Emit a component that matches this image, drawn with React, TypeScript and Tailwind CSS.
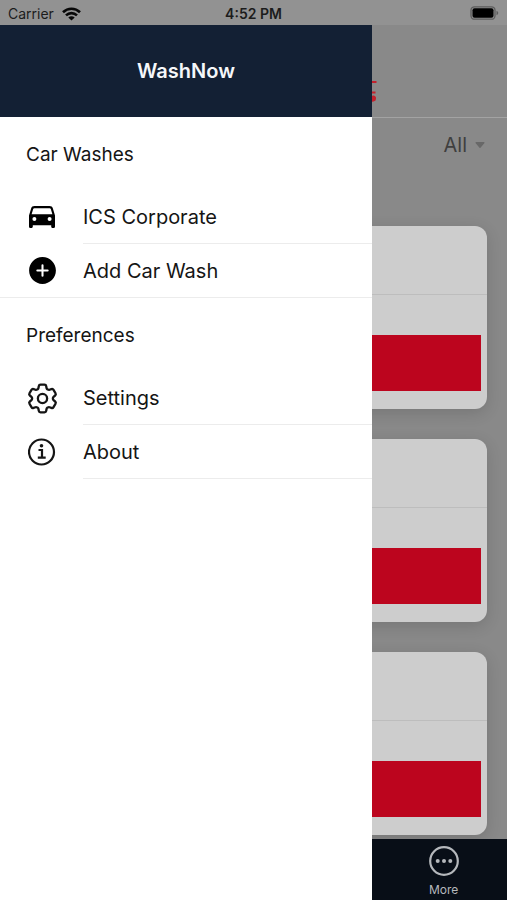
import type { ReactNode } from "react";
import { HiOutlineCog6Tooth } from "react-icons/hi2";
import { IoAddCircle, IoCaretDown } from "react-icons/io5";

function StatusBar() {
  return (
    <div className="grid h-[25px] shrink-0 grid-cols-3 items-center bg-[#929292] px-2 text-sm text-[#1c1c1c]">
      <div className="flex items-center gap-2 pt-0.5">
        <span>Carrier</span>
        <svg className="h-[14px] w-[19px]" viewBox="0 0 19 14" aria-hidden="true">
          <g fill="none" stroke="#080808" strokeWidth="2.6">
            <path d="M1 5.2C5.800 .5 13.200 .5 18 5.200" />
            <path d="M4 8.400C7.200 5.300 11.800 5.300 15 8.400" />
          </g>
          <path d="M6.300 10.400C8.200 8.800 10.800 8.800 12.700 10.400L9.500 13.600Z" fill="#080808" />
        </svg>
      </div>
      <span className="pt-0.5 text-center font-semibold whitespace-nowrap">4:52 PM</span>
      <svg className="h-[14px] w-[30px] justify-self-end" viewBox="0 0 30 14" aria-hidden="true">
        <rect x="2" y=".8" width="24" height="12.400" rx="3.500" fill="none" stroke="#5c5c5c" strokeWidth="1.300" />
        <rect x="3.500" y="2.300" width="21" height="9.400" rx="2" fill="#000" />
        <path d="M27.500 4.800C29.800 5.600 29.800 8.400 27.500 9.200Z" fill="#5c5c5c" />
      </svg>
    </div>
  );
}

function CarIcon() {
  return (
    <svg className="h-[22px] w-[26px] shrink-0" viewBox="0 0 26 22" aria-hidden="true">
      <path
        fillRule="evenodd"
        fill="#000"
        d="M5.500 0H20.500C22.300 0 23.400 .9 23.800 2.300L26 9.500V20.500C26 21.400 25.500 22 24.700 22H23.600C22.700 22 22.200 21.400 22.200 20.500V19.300H3.800V20.500C3.800 21.400 3.300 22 2.400 22H1.300C.5 22 0 21.400 0 20.500V9.500L2.200 2.300C2.600 .9 3.700 0 5.500 0ZM5.300 2.200C4.700 2.200 4.400 2.500 4.200 3L2.600 8.200H23.400L21.800 3C21.600 2.500 21.300 2.200 20.700 2.200ZM5.400 11A2 2 0 1 0 5.400 15A2 2 0 1 0 5.400 11ZM20.600 11A2 2 0 1 0 20.600 15A2 2 0 1 0 20.600 11Z"
      />
    </svg>
  );
}

function InfoIcon() {
  return (
    <svg className="mr-px h-7 w-7 shrink-0" viewBox="0 0 28 28" fill="none" stroke="#151515" aria-hidden="true">
      <circle cx="13.500" cy="14" r="12.500" strokeWidth="2.200" />
      <path d="M10.500 12H14V19.500M9.800 19.700H17.700" strokeWidth="2.200" />
      <circle cx="13.500" cy="7.800" r="1.800" fill="#151515" stroke="none" />
    </svg>
  );
}

function MoreIcon() {
  return (
    <svg className="h-[30px] w-[30px]" viewBox="0 0 30 30" aria-hidden="true">
      <circle cx="15" cy="15" r="13.800" fill="none" stroke="#b5b8bc" strokeWidth="2.200" />
      <g fill="#b5b8bc">
        <circle cx="8.700" cy="15" r="2" />
        <circle cx="15" cy="15" r="2" />
        <circle cx="21.300" cy="15" r="2" />
      </g>
    </svg>
  );
}

function WashCard() {
  return (
    <article className="rounded-xl bg-[#cdcdcd] shadow-[0_4px_16px_rgba(0,0,0,0.14)]">
      <div className="h-[69px] border-b border-[#bdbdbd]" />
      <div className="px-1.5 pt-10 pb-[18px]">
        <div className="h-14 bg-[#bc051e]" />
      </div>
    </article>
  );
}

function MenuItem({ icon, label, full = false }: { icon: ReactNode; label: string; full?: boolean }) {
  return (
    <li className={full ? "border-b border-[#ececec]" : ""}>
      <button type="button" className="flex w-full items-center pl-[26px] text-left text-xl">
        <span className="flex w-[57px] shrink-0">
          <span className="flex w-8 justify-center">{icon}</span>
        </span>
        <span className={full ? "flex h-[53px] grow items-center" : "flex h-[54px] grow items-center border-b border-[#ececec]"}>
          {label}
        </span>
      </button>
    </li>
  );
}

function MenuHeading({ children }: { children: ReactNode }) {
  return <h2 className="flex h-[73px] items-center pt-1 pl-[26px] text-[19px]">{children}</h2>;
}

function Drawer() {
  return (
    <aside className="absolute top-[25px] bottom-0 left-0 w-[372px] max-w-full bg-white text-[#151515]">
      <header className="flex h-[92px] items-center justify-center bg-[#132034]">
        <h1 className="text-xl font-semibold text-[#f5f7fa]">WashNow</h1>
      </header>
      <nav>
        <MenuHeading>Car Washes</MenuHeading>
        <ul>
          <MenuItem icon={<CarIcon />} label="ICS Corporate" />
          <MenuItem icon={<IoAddCircle size={33} className="shrink-0 text-black" />} label="Add Car Wash" full />
        </ul>
        <MenuHeading>Preferences</MenuHeading>
        <ul>
          <MenuItem icon={<HiOutlineCog6Tooth size={37} className="shrink-0" />} label="Settings" />
          <MenuItem icon={<InfoIcon />} label="About" />
        </ul>
      </nav>
    </aside>
  );
}

export default function App() {
  return (
    <div className="relative flex h-screen flex-col overflow-hidden bg-[#898989] font-['Inter','Liberation_Sans',sans-serif]">
      <StatusBar />
      <header className="flex h-[93px] shrink-0 items-center border-b border-[#a3a3a3] pt-8 pl-[366px]">
        <svg className="h-8 w-3" viewBox="0 0 12 32" aria-hidden="true">
          <path d="M5 11H10.500M5 21.500H9.500" stroke="#c3202c" strokeWidth="2" fill="none" />
          <path d="M5 25C8 23.500 10.500 25 10 28C9.500 30.500 7 31 5 30.500Z" fill="#c3202c" />
        </svg>
      </header>
      <main className="min-h-0 grow overflow-hidden px-5">
        <div className="flex h-[54px] items-center justify-end">
          <button type="button" className="flex items-center gap-1.5 text-xl text-[#3f3f3f]">
            All
            <IoCaretDown size={14} className="text-[#686868]" />
          </button>
        </div>
        <div className="flex flex-col gap-[30px] pt-[54px]">
          <WashCard />
          <WashCard />
          <WashCard />
        </div>
      </main>
      <footer className="grid h-[61px] shrink-0 grid-cols-4 bg-[#080e17]">
        <button type="button" className="col-start-4 flex flex-col items-center justify-center gap-1.5 pt-1 text-xs text-[#b5b8bc]">
          <MoreIcon />
          More
        </button>
      </footer>
      <Drawer />
    </div>
  );
}
